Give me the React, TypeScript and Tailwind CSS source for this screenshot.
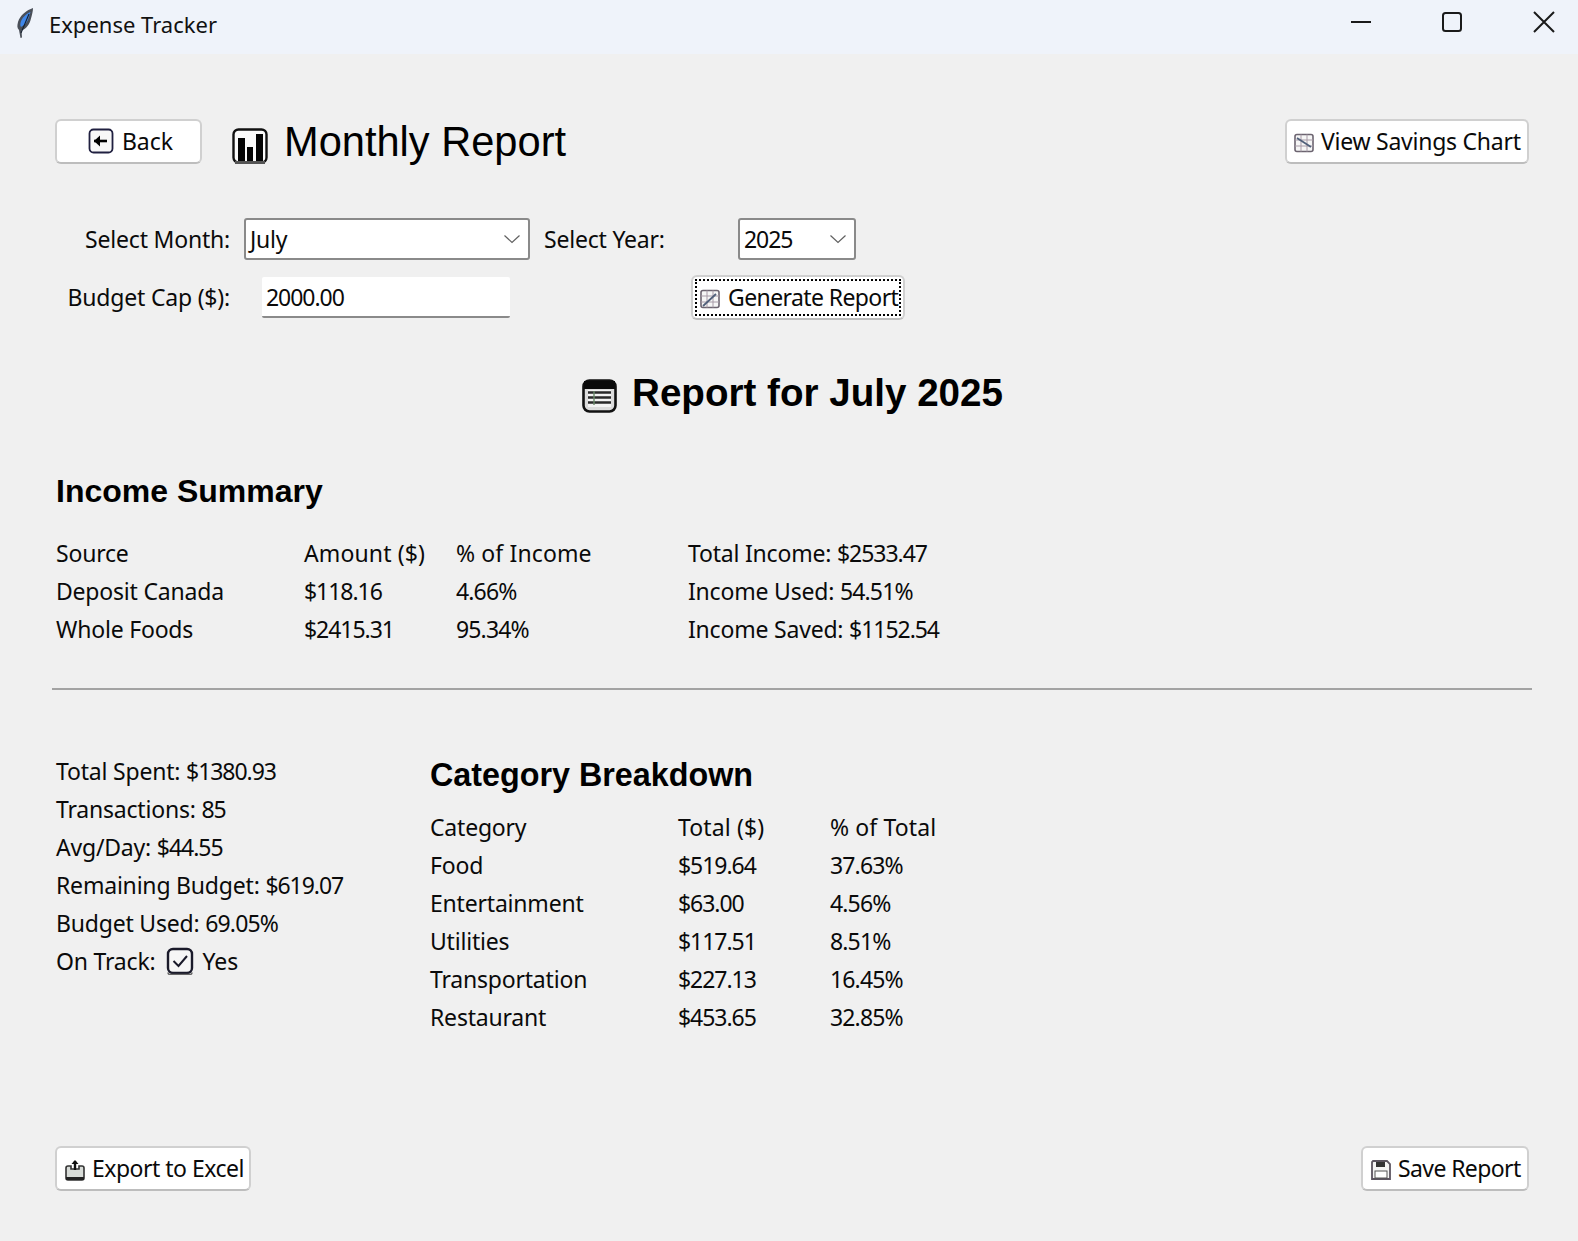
import React from "react";

const ui = "font-['Noto_Sans',sans-serif] text-[23px] leading-[38px] text-[#0a0a0a] whitespace-nowrap";
const arial = "font-['Liberation_Sans',Arial,sans-serif] text-black whitespace-nowrap";

function T({ children }: { children: string }) {
  if (/^%|\(\$\)$/.test(children)) {
    return <span className="tracking-[0.12px]">{children}</span>;
  }
  const parts = children.split(/(\$?\d[\d.]*%?)/);
  return (
    <>
      {parts.map((p, i) =>
        i % 2 === 1 ? (
          p.endsWith("%") ? (
            <span key={i} className="tracking-[-0.85px]">{p}</span>
          ) : (
            <span key={i} className="tracking-[-1.05px]">{p}</span>
          )
        ) : (
          <span key={i} className="tracking-[-0.2px]">{p}</span>
        )
      )}
    </>
  );
}

function Feather() {
  return (
    <svg width="20" height="32" viewBox="0 0 20 32" className="shrink-0 -mt-[8px]">
      <path d="M18 1C12 3 5 8 3 15c-1 4-1 6 1 8l1.500 8 1.500-.5-.5-7c5-2 8-6 9.500-12 1-4 2-7 2-10.500z" fill="#4a4f58" />
      <path d="M15.500 5C11 7 6.500 11 5.500 16c-.5 2 0 3 .5 4 4-2 6.500-5 8-10 .5-2 1-3.500 1.500-5z" fill="#3f86e8" />
      <path d="M14 7 6 26" stroke="#16202e" strokeWidth="1.100" fill="none" />
    </svg>
  );
}

function Btn({ className, icon, children }: { className: string; icon: React.ReactNode; children: React.ReactNode }) {
  return (
    <div className={`h-[45px] flex items-center bg-white border-2 border-[#d0d0d0] border-b-[#bdbdbd] rounded-[6px] ${ui} ${className}`}>
      {icon}
      {children}
    </div>
  );
}

function Chevron() {
  return (
    <svg width="18" height="10" viewBox="0 0 18 10" className="shrink-0">
      <path d="M1.500 1.500 9 8.500l7.500-7" fill="none" stroke="#606060" strokeWidth="1.200" />
    </svg>
  );
}

function Combo({ className, value }: { className: string; value: string }) {
  return (
    <div className={`h-[42px] flex items-center justify-between bg-white border-2 border-[#8a8a8a] rounded-[3px] pl-[4px] pr-[7px] ${ui} ${className}`}>
      <span><T>{value}</T></span>
      <Chevron />
    </div>
  );
}

function Row({ cells, cols }: { cells: string[]; cols: string }) {
  return (
    <div className={`grid ${cols} ${ui}`}>
      {cells.map((c, i) => (
        <span key={i}><T>{c}</T></span>
      ))}
    </div>
  );
}

function SmallChart({ kind }: { kind: "gen" | "save" }) {
  return (
    <svg width="20" height="20" viewBox="0 0 20 20" className="shrink-0 mt-[5px]">
      <rect x="1" y="1.500" width="18" height="17" rx="2" fill="#f6f6f6" stroke="#6c6470" strokeWidth="1.600" />
      <path d="M1 7h18M7 1.500v17M13 1.500v17M1 13h18" stroke="#a89ca8" strokeWidth="1" />
      {kind === "gen" ? (
        <path d="M3 17 16 5" stroke="#50607a" strokeWidth="1.800" />
      ) : (
        <path d="M3 5l14 9" stroke="#50607a" strokeWidth="1.800" />
      )}
    </svg>
  );
}

export default function App() {
  const incomeCols = "grid-cols-[248px_152px_232px_auto]";
  const catCols = "grid-cols-[248px_152px_auto]";
  return (
    <div className="w-[1578px] h-[1241px] bg-[#f0f0f0] overflow-hidden flex flex-col">
      <div className={`h-[54px] shrink-0 bg-[#eff3fa] flex items-center pl-[15px] ${ui}`}>
        <Feather />
        <span className="ml-[14px] text-[22px] -mt-[6px] text-[#111]">Expense Tracker</span>
        <div className="ml-auto flex items-center pr-[23px] -mt-[10px]">
          <svg width="22" height="22" viewBox="0 0 22 22"><path d="M1 11h20" stroke="#1a1a1a" strokeWidth="2" /></svg>
          <svg width="22" height="22" viewBox="0 0 22 22" className="ml-[69px]"><rect x="2" y="2" width="18" height="18" rx="2.500" fill="none" stroke="#1a1a1a" strokeWidth="2" /></svg>
          <svg width="22" height="22" viewBox="0 0 22 22" className="ml-[70px]"><path d="M1 1l20 20M21 1 1 21" stroke="#1a1a1a" strokeWidth="2" /></svg>
        </div>
      </div>

      <div className="flex-1 flex flex-col pl-[55px] pr-[49px] pt-[65px] pb-[50px]">
        <div className="flex items-start">
          <Btn className="w-[147px] justify-center gap-[8px] pl-[4px] pb-[2px]" icon={
            <svg width="26" height="26" viewBox="0 0 26 26" className="shrink-0">
              <rect x="1.500" y="1.500" width="23" height="23" rx="4" fill="#f8f8f8" stroke="#202040" strokeWidth="1.800" />
              <path d="M6 13h13" stroke="#000" strokeWidth="2.600" />
              <path d="M12 7.500 6 13l6 5.500z" fill="#000" />
            </svg>
          }>Back</Btn>
          <svg width="36" height="36" viewBox="0 0 36 36" className="ml-[30px] mt-[9px] shrink-0">
            <rect x="1.500" y="1.500" width="33" height="33" rx="5" fill="#fbfbfb" stroke="#111" strokeWidth="2.400" />
            <rect x="6" y="10" width="7" height="23" fill="#050505" />
            <rect x="15" y="19" width="6" height="14" fill="#050505" />
            <rect x="24" y="6" width="7" height="27" fill="#050505" />
            <rect x="3" y="33" width="30" height="3" fill="#555" />
          </svg>
          <div className={`${arial} ml-[16px] mt-[1px] text-[41.6px] leading-[44px]`}>Monthly Report</div>
          <Btn className="ml-auto w-[244px] pl-[7px] gap-[7px] pb-[2px] tracking-[-0.25px]" icon={<SmallChart kind="save" />}>View Savings Chart</Btn>
        </div>

        <div className="mt-[54px] flex items-center">
          <div className={`w-[175px] text-right ${ui}`}><T>Select Month:</T></div>
          <Combo className="ml-[14px] w-[286px]" value="July" />
          <div className={`ml-[14px] w-[194px] ${ui}`}><T>Select Year:</T></div>
          <Combo className="w-[118px]" value="2025" />
        </div>
        <div className="mt-[15px] flex items-center">
          <div className={`w-[175px] text-right -mt-[2px] ${ui}`}><T>Budget Cap ($):</T></div>
          <div className={`ml-[32px] w-[248px] h-[41px] flex items-center bg-white border-b-2 border-[#8a8a8a] rounded-[2px] pl-[4px] ${ui}`}><T>2000.00</T></div>
          <Btn className="ml-[181px] w-[214px] h-[44px] p-[2px]" icon={null}>
            <div className="w-full h-full flex items-center border-2 border-dotted border-black pl-[3px] gap-[8px] pb-[2px]">
              <SmallChart kind="gen" />
              <span className="tracking-[-0.6px]">Generate Report</span>
            </div>
          </Btn>
        </div>

        <div className="mt-[50px] flex items-center justify-center pl-[1px]">
          <svg width="35" height="34" viewBox="0 0 35 34" className="mt-[5px] shrink-0">
            <rect x="1.500" y="1.500" width="32" height="31" rx="6" fill="#dcdcdc" stroke="#111" strokeWidth="2.600" />
            <rect x="2" y="2" width="31" height="8" fill="#0a0a0a" />
            <rect x="6" y="11" width="23" height="17" fill="#f4f4f4" />
            <path d="M6 13.500h23M6 18.500h23M6 23.500h23" stroke="#2a2a2a" strokeWidth="2.600" />
            <path d="M12 12v14" stroke="#6a8a6a" strokeWidth="1.400" />
          </svg>
          <div className={`${arial} ml-[15px] text-[38.6px] leading-[46px] font-bold`}>Report for July 2025</div>
        </div>

        <div className={`${arial} mt-[55px] ml-[1px] text-[32px] leading-[40px] font-bold`}>Income Summary</div>
        <div className="mt-[23px] ml-[1px]">
          <Row cols={incomeCols} cells={["Source", "Amount ($)", "% of Income", "Total Income: $2533.47"]} />
          <Row cols={incomeCols} cells={["Deposit Canada", "$118.16", "4.66%", "Income Used: 54.51%"]} />
          <Row cols={incomeCols} cells={["Whole Foods", "$2415.31", "95.34%", "Income Saved: $1152.54"]} />
        </div>

        <div className="mt-[40px] ml-[-3px] mr-[-3px] h-[2px] bg-[#a3a3a3]" />

        <div className="mt-[62px] ml-[1px] flex items-start">
          <div className="w-[374px]">
            {["Total Spent: $1380.93", "Transactions: 85", "Avg/Day: $44.55", "Remaining Budget: $619.07", "Budget Used: 69.05%"].map((t) => (
              <div key={t} className={ui}><T>{t}</T></div>
            ))}
            <div className={`flex items-center ${ui}`}>
              <span><T>On Track:</T></span>
              <svg width="28" height="28" viewBox="0 0 28 28" className="ml-[11px] shrink-0">
                <rect x="2" y="2" width="24" height="24" rx="5" fill="#f6f6f6" stroke="#1a1a2a" strokeWidth="2.400" />
                <path d="M2 25.500a2 2 0 0 0 2 2h20a2 2 0 0 0 2-2" fill="none" stroke="#666" strokeWidth="1.500" />
                <path d="M7.500 14 12.500 19 21 9" fill="none" stroke="#1a1a2a" strokeWidth="2" />
              </svg>
              <span className="ml-[8px]">Yes</span>
            </div>
          </div>
          <div>
            <div className={`${arial} text-[32.3px] leading-[40px] font-bold mt-[3px]`}>Category Breakdown</div>
            <div className="mt-[13px]">
              <Row cols={catCols} cells={["Category", "Total ($)", "% of Total"]} />
              <Row cols={catCols} cells={["Food", "$519.64", "37.63%"]} />
              <Row cols={catCols} cells={["Entertainment", "$63.00", "4.56%"]} />
              <Row cols={catCols} cells={["Utilities", "$117.51", "8.51%"]} />
              <Row cols={catCols} cells={["Transportation", "$227.13", "16.45%"]} />
              <Row cols={catCols} cells={["Restaurant", "$453.65", "32.85%"]} />
            </div>
          </div>
        </div>

        <div className="mt-auto flex items-center justify-between">
          <Btn className="w-[196px] pl-[8px] gap-[7px] pb-[2px] tracking-[-0.5px]" icon={
            <svg width="20" height="22" viewBox="0 0 20 22" className="shrink-0 mt-[5px]">
              <path d="M3 7h3v3h8V7h3a2 2 0 0 1 2 2v10a2 2 0 0 1-2 2H3a2 2 0 0 1-2-2V9a2 2 0 0 1 2-2z" fill="#d8dcd8" stroke="#333" strokeWidth="1.600" />
              <path d="M10 11V2" stroke="#111" strokeWidth="2.400" />
              <path d="M6.500 5 10 1l3.500 4z" fill="#111" />
              <rect x="1" y="18" width="18" height="3" fill="#222" />
            </svg>
          }>Export to Excel</Btn>
          <Btn className="w-[168px] pl-[8px] gap-[7px] pb-[2px] tracking-[-0.6px]" icon={
            <svg width="20" height="20" viewBox="0 0 20 20" className="shrink-0 mt-[5px]">
              <path d="M2 1h14l3 3v15H1V2z" fill="#f4f4f4" stroke="#5c5560" strokeWidth="1.800" />
              <rect x="5" y="2" width="9" height="5" fill="#333" />
              <rect x="4" y="11" width="12" height="7" fill="#fff" stroke="#555" strokeWidth="1" />
            </svg>
          }>Save Report</Btn>
        </div>
      </div>
    </div>
  );
}
